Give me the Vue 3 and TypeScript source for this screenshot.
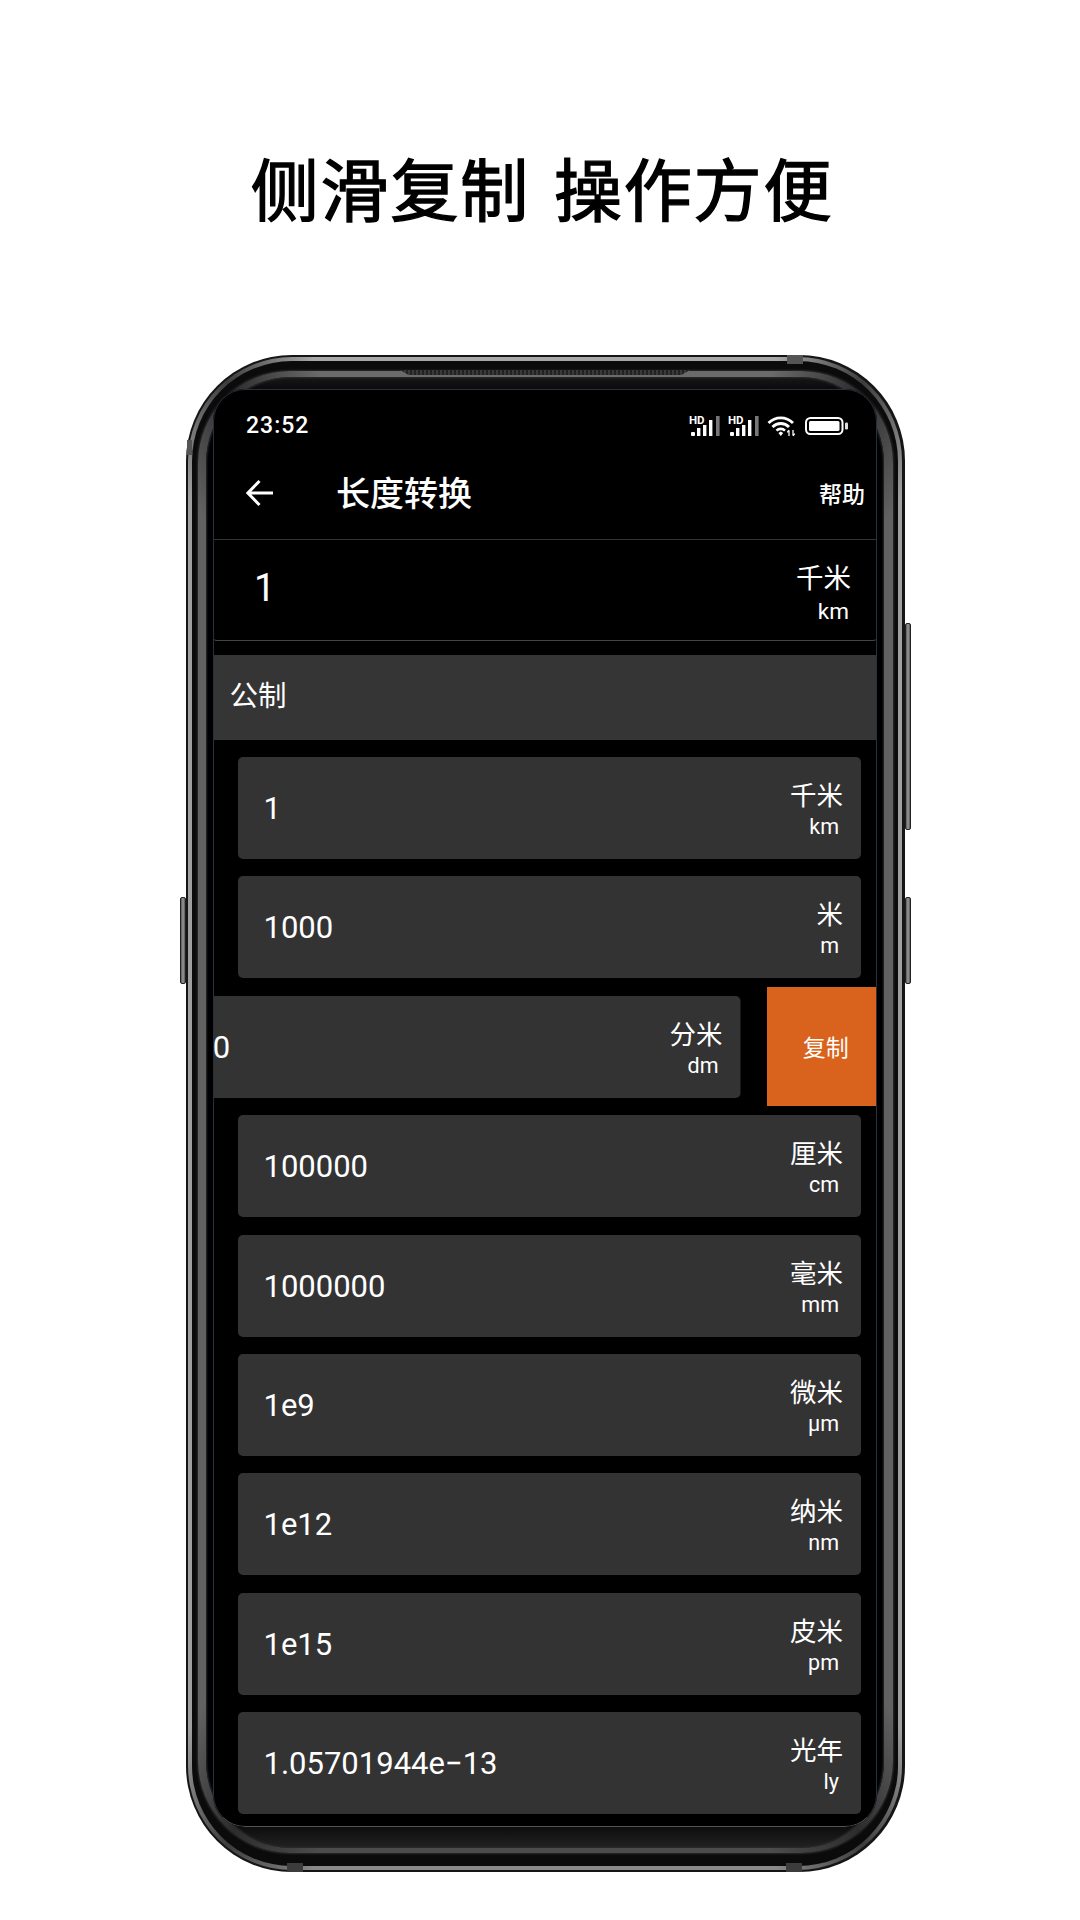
<script setup lang="ts">
interface Row {
  value: string
  name: string
  unit: string
  swiped?: boolean
}

const rows: Row[] = [
  { value: '1', name: '千米', unit: 'km' },
  { value: '1000', name: '米', unit: 'm' },
  { value: '10000', name: '分米', unit: 'dm', swiped: true },
  { value: '100000', name: '厘米', unit: 'cm' },
  { value: '1000000', name: '毫米', unit: 'mm' },
  { value: '1e9', name: '微米', unit: 'μm' },
  { value: '1e12', name: '纳米', unit: 'nm' },
  { value: '1e15', name: '皮米', unit: 'pm' },
  { value: '1.05701944e−13', name: '光年', unit: 'ly' },
]

const sims = [0, 1]
</script>

<template>
  <div class="page">
    <h1 class="title">侧滑复制 操作方便</h1>
    <div class="phone-wrap">
      <div class="phone">
        <span class="btn btn-left"></span>
        <span class="btn btn-right-a"></span>
        <span class="btn btn-right-b"></span>
        <span class="band band-top"></span>
        <span class="band band-bottom-l"></span>
        <span class="band band-bottom-r"></span>
        <span class="band-side"></span>
        <span class="speaker"></span>
        <div class="ring-light">
          <div class="ring-gray">
            <div class="screen">
              <div class="status">
                <span class="time">23:52</span>
                <div class="status-icons">
                  <svg v-for="s in sims" :key="s" class="sig" viewBox="0 0 32 20" width="32" height="20">
                    <text x="0" y="8" class="hd">HD</text>
                    <rect x="2" y="16" width="4" height="4" rx="1" fill="#fff" />
                    <rect x="8" y="12" width="3.4" height="8" fill="#fff" />
                    <rect x="14" y="9" width="3.4" height="11" fill="#fff" />
                    <rect x="20" y="4" width="3.4" height="16" fill="#fff" />
                    <rect x="27" y="0" width="3.6" height="20" fill="#777" />
                  </svg>
                  <svg class="wifi" viewBox="0 0 29 20" width="29" height="20">
                    <path d="M1.5 7 A17 17 0 0 1 26 7" fill="none" stroke="#fff" stroke-width="2.8" />
                    <path d="M5.5 11 A11.5 11.5 0 0 1 22 11" fill="none" stroke="#fff" stroke-width="2.8" />
                    <path d="M9.5 14.6 A6 6 0 0 1 18 14.6" fill="none" stroke="#fff" stroke-width="2.6" />
                    <path d="M11.4 17 L13.8 15.4 L16.2 17 L13.8 20 Z" fill="#fff" />
                    <path d="M22 20 V14.5 M20.2 16.4 L22 14.2 M26 14 V19.6 M27.8 17.6 L26 19.8" fill="none" stroke="#fff" stroke-width="1.3" />
                  </svg>
                  <svg class="battery" viewBox="0 0 43 18" width="43" height="18">
                    <rect x="1" y="1" width="36.5" height="16" rx="4.5" fill="none" stroke="#fff" stroke-width="2" />
                    <rect x="4" y="4" width="30.5" height="10" rx="1.5" fill="#fff" />
                    <rect x="40" y="5.5" width="3" height="7" rx="1.2" fill="#ddd" />
                  </svg>
                </div>
              </div>
              <header class="toolbar">
                <svg class="back" viewBox="0 0 28 28" width="28" height="28">
                  <path d="M27 14 H2 M13.5 2 L1.8 14 L13.5 26" fill="none" stroke="#fff" stroke-width="3" />
                </svg>
                <span class="toolbar-title">长度转换</span>
                <span class="help">帮助</span>
              </header>
              <div class="input">
                <span class="input-value">1</span>
                <div class="unit-block unit-block-big">
                  <span class="name name-big">千米</span>
                  <span class="unit unit-big">km</span>
                </div>
              </div>
              <div class="section">公制</div>
              <div class="list">
                <div v-for="row in rows" :key="row.unit" class="row">
                  <div v-if="row.swiped" class="copy">复制</div>
                  <div class="card" :class="{ swiped: row.swiped }">
                    <span class="value">{{ row.value }}</span>
                    <div class="unit-block">
                      <span class="name">{{ row.name }}</span>
                      <span class="unit">{{ row.unit }}</span>
                    </div>
                  </div>
                </div>
              </div>
            </div>
          </div>
        </div>
      </div>
    </div>
  </div>
</template>

<style>
html, body { margin: 0; background: #fff; }
</style>

<style scoped>
.page {
  width: 1080px;
  height: 1920px;
  background: #fff;
  overflow: hidden;
  font-family: "Noto Sans CJK SC", "Noto Sans", sans-serif;
  box-sizing: border-box;
  padding-top: 147px;
}
.title {
  margin: 0;
  height: 80px;
  line-height: 80px;
  font-size: 68px;
  font-weight: 400;
  -webkit-text-stroke: 1.4px #000;
  color: #000;
  text-align: center;
  letter-spacing: 1.8px;
  word-spacing: 7px;
  padding-left: 4px;
}
.phone-wrap {
  margin-top: 128px;
  padding-left: 186px;
}
.phone {
  position: relative;
  box-sizing: border-box;
  width: 719px;
  height: 1517px;
  border-radius: 106px;
  background: #151515;
  padding: 2px 3px 2px 2px;
}
.ring-light {
  box-sizing: border-box;
  height: 100%;
  border: 4px solid transparent;
  border-radius: 104px;
  background:
    linear-gradient(#0b0b0b, #0b0b0b) padding-box,
    conic-gradient(#a8a8a8 0 17deg, #3c3c3c 23.5deg, #a0a0a0 30deg 150deg, #3c3c3c 156.5deg, #8a8a8a 163deg 197deg, #3c3c3c 203.5deg, #a0a0a0 210deg 330deg, #3c3c3c 336.5deg, #a8a8a8 343deg) border-box;
  padding: 10px 5px 13px 6px;
}
.ring-gray {
  box-sizing: border-box;
  height: 100%;
  border-style: solid;
  border-color: transparent;
  border-width: 6px 9px 5px 8px;
  border-radius: 92px;
  padding: 12px 7px 21px 7px;
  background:
    linear-gradient(#181818, #000 1.4%, #000 97.6%, #222) padding-box,
    conic-gradient(#6a6a6a 0 17deg, #2c2c2c 23.5deg, #626262 30deg 150deg, #2c2c2c 156.5deg, #4c4c4c 163deg 197deg, #2c2c2c 203.5deg, #626262 210deg 330deg, #2c2c2c 336.5deg, #6a6a6a 343deg) border-box;
  box-shadow: 0 0 2px 1px #2a2a2a, inset 0 0 2px 1px #2a2a2a;
}
.screen {
  position: relative;
  box-sizing: border-box;
  height: 100%;
  border-radius: 32px;
  background: #000;
  overflow: hidden;
  color: #fff;
  display: flex;
  flex-direction: column;
}
.screen::after {
  content: "";
  position: absolute;
  inset: 0;
  border-radius: 32px;
  border: 1px solid #28303e;
  border-bottom-color: #555;
  pointer-events: none;
}
.status {
  flex: none;
  box-sizing: border-box;
  height: 70px;
  display: flex;
  align-items: center;
  justify-content: space-between;
  padding: 3px 29px 0 33px;
}
.time {
  font-family: Roboto, sans-serif;
  font-size: 23px;
  letter-spacing: 1px;
  font-weight: 500;
}
.status-icons {
  display: flex;
  align-items: center;
  gap: 7px;
}
.sig, .wifi, .battery { display: block; overflow: visible; }
.wifi { margin-right: 2px; }
.hd {
  font-family: Roboto, sans-serif;
  font-size: 11.5px;
  font-weight: 700;
  fill: #fff;
}
.toolbar {
  flex: none;
  box-sizing: border-box;
  height: 81px;
  padding: 0 12px 12px 33px;
  display: flex;
  align-items: center;
  border-bottom: 1.5px solid #333;
}
.back { flex: none; }
.toolbar-title {
  margin-left: 62px;
  font-size: 34px;
  font-weight: 500;
  line-height: 46px;
  margin-top: -2px;
}
.help {
  margin-left: auto;
  font-size: 23px;
  font-weight: 500;
  margin-top: -1px;
}
.input {
  flex: none;
  box-sizing: border-box;
  height: 101px;
  display: flex;
  align-items: center;
  justify-content: space-between;
  padding: 0 26px 0 41px;
  border-bottom: 1.5px solid #444;
  border-radius: 0 0 4px 4px;
}
.input-value {
  font-family: Roboto, sans-serif;
  font-size: 38px;
  margin-top: -5px;
}
.section {
  flex: none;
  margin-top: 14px;
  height: 85px;
  line-height: 78px;
  padding-left: 16.5px;
  background: #353535;
  font-size: 28.5px;
}
.list {
  flex: none;
  margin-top: 17px;
  padding: 0 16px 0 24.5px;
  display: flex;
  flex-direction: column;
  gap: 17.4px;
}
.row {
  position: relative;
  height: 102px;
}
.card {
  box-sizing: border-box;
  height: 100%;
  border-radius: 5px;
  background: #333;
  display: flex;
  align-items: center;
  justify-content: space-between;
  padding: 0 18px 0 26px;
}
.card.swiped {
  transform: translateX(-120.5px);
}
.copy {
  position: absolute;
  top: -9px;
  right: -16px;
  width: 110.5px;
  height: 119px;
  background: #d9631c;
  display: flex;
  align-items: center;
  justify-content: center;
  font-size: 23px;
  padding-left: 8px;
  box-sizing: border-box;
}
.value {
  font-family: Roboto, sans-serif;
  font-size: 31px;
  margin-top: 1px;
}
.unit-block {
  display: flex;
  flex-direction: column;
  align-items: flex-end;
  padding-top: 4px;
}
.unit-block-big { padding-top: 4px; }
.name {
  font-size: 26.5px;
  line-height: 32px;
  margin-top: -1px;
}
.unit {
  font-family: Roboto, sans-serif;
  font-size: 21.5px;
  line-height: 28px;
  margin-right: 4px;
  margin-top: 3px;
}
.name-big { font-size: 27.5px; line-height: 34px; margin-top: 0; }
.unit-big { font-size: 22.5px; margin-right: 2px; margin-top: 4px; }
.btn {
  position: absolute;
  width: 6px;
  background: linear-gradient(90deg, #555, #9a9a9a 50%, #555);
  border: 1px solid #222;
  border-radius: 2px;
  box-sizing: border-box;
}
.btn-left { left: -6px; top: 542px; height: 87px; }
.btn-right-a { right: -6px; top: 268px; height: 207px; }
.btn-right-b { right: -6px; top: 542px; height: 87px; }
.band {
  position: absolute;
  width: 16px;
  height: 9px;
  background: #555;
  z-index: 1;
}
.band-top { top: 0; left: 601px; }
.band-bottom-l { bottom: 0; left: 101px; background: #3c3c3c; }
.band-bottom-r { bottom: 0; left: 600px; background: #3c3c3c; }
.band-side {
  position: absolute;
  left: 1px;
  top: 85px;
  width: 5px;
  height: 15px;
  background: #555;
  z-index: 1;
}
.speaker {
  position: absolute;
  left: 214px;
  top: 15px;
  width: 290px;
  height: 5px;
  background: repeating-linear-gradient(90deg, #3a3a3a 0 2px, #222 2px 4px);
  clip-path: polygon(0 0, 100% 0, 97% 100%, 3% 100%);
  z-index: 1;
}
</style>
